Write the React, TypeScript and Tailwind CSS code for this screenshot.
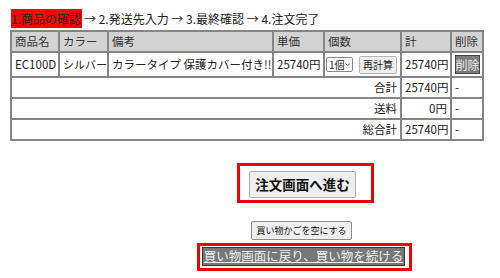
import React from "react";

const font = { fontFamily: '"Noto Sans CJK JP", "Noto Sans", sans-serif' };

export default function App() {
  const td = "border-2 border-[#858585] px-[3px] py-0 text-[11.5px] text-[#222] whitespace-nowrap overflow-hidden";
  const th = "border-2 border-[#858585] px-[3px] py-0 text-[11.5px] text-[#333] font-normal text-left bg-[#d3d3d3] whitespace-nowrap h-[21px]";
  return (
    <div className="w-[500px] h-[278px] bg-white overflow-hidden" style={font}>
      <div className="pl-[11px] pt-[9px] text-[12px] leading-[19px] text-[#222] flex items-center">
        <span className="bg-[#ff0000] pr-[1px]">1.商品の確認</span>
        <span className="ml-[2px]">→ 2.発送先入力 → 3.最終確認 → 4.注文完了</span>
      </div>
      <table className="ml-[10px] mt-[2px] border-collapse border-2 border-[#858585] w-[472px] table-fixed">
        <colgroup>
          <col className="w-[48px]" />
          <col className="w-[49px]" />
          <col className="w-[165px]" />
          <col className="w-[51px]" />
          <col className="w-[77px]" />
          <col className="w-[50px]" />
          <col className="w-[32px]" />
        </colgroup>
        <thead>
          <tr>
            <th className={th}>商品名</th>
            <th className={th}>カラー</th>
            <th className={th}>備考</th>
            <th className={th}>単価</th>
            <th className={th}>個数</th>
            <th className={th}>計</th>
            <th className={th}>削除</th>
          </tr>
        </thead>
        <tbody>
          <tr className="h-[25px]">
            <td className={td}>EC100D</td>
            <td className={td + " px-[2px] text-[11px]"}>シルバー</td>
            <td className={td}>カラータイプ 保護カバー付き!!</td>
            <td className={td}>25740円</td>
            <td className={td + " pl-[1px] pr-0"}>
              <div className="flex items-center gap-[6px]">
                <span className="inline-flex items-center justify-between border border-[#8a8a8a] rounded-[2px] h-[15px] w-[27px] px-[2px] text-[10px] leading-none bg-white">
                  1個
                  <svg width="7" height="5" viewBox="0 0 8 6">
                    <path d="M1 1.5 L4 4.5 L7 1.5" fill="none" stroke="#333" strokeWidth="1.4" />
                  </svg>
                </span>
                <span className="inline-flex items-center justify-center border border-[#b5b5b5] rounded-[2px] h-[18px] w-[38px] text-[10px] leading-none bg-[#efefef]">
                  再計算
                </span>
              </div>
            </td>
            <td className={td}>25740円</td>
            <td className={td + " px-[2px]"}>
              <span className="inline-flex items-center justify-center bg-[#7d7d7d] border border-[#444] text-[#e8e8e8] text-[12px] h-[19px] w-[25px] leading-none">
                削除
              </span>
            </td>
          </tr>
          <tr className="h-[21px]">
            <td colSpan={5} className={td + " text-right"}>合計</td>
            <td className={td}>25740円</td>
            <td className={td}>-</td>
          </tr>
          <tr className="h-[21px]">
            <td colSpan={5} className={td + " text-right"}>送料</td>
            <td className={td + " text-right"}>0円</td>
            <td className={td}>-</td>
          </tr>
          <tr className="h-[21px]">
            <td colSpan={5} className={td + " text-right"}>総合計</td>
            <td className={td}>25740円</td>
            <td className={td}>-</td>
          </tr>
        </tbody>
      </table>
      <div className="mt-[22px] ml-[237px] w-[137px] h-[40px] border-[3px] border-[#ee0000] pl-[9px] pt-[5px]">
        <div className="flex items-center justify-center h-[27px] w-[107px] bg-[#efefef] border border-[#b0b0b0] rounded-[2px] text-[13.5px] font-bold text-[#111] leading-none">
          注文画面へ進む
        </div>
      </div>
      <div className="mt-[18px] ml-[251px] flex items-center justify-center h-[19px] w-[101px] bg-[#efefef] border border-[#8d8d8d] rounded-[2px] text-[9px] text-[#111] leading-none whitespace-nowrap">
        買い物かごを空にする
      </div>
      <div className="mt-[3px] ml-[197px] w-[215px] h-[28px] border-[3px] border-[#ee0000] pl-[2px] pt-[1px]">
        <div className="flex items-center justify-center h-[19px] w-[203px] bg-[#777777] border border-[#333] text-[12.5px] text-[#eeeeee] underline leading-none whitespace-nowrap">
          買い物画面に戻り、買い物を続ける
        </div>
      </div>
    </div>
  );
}
